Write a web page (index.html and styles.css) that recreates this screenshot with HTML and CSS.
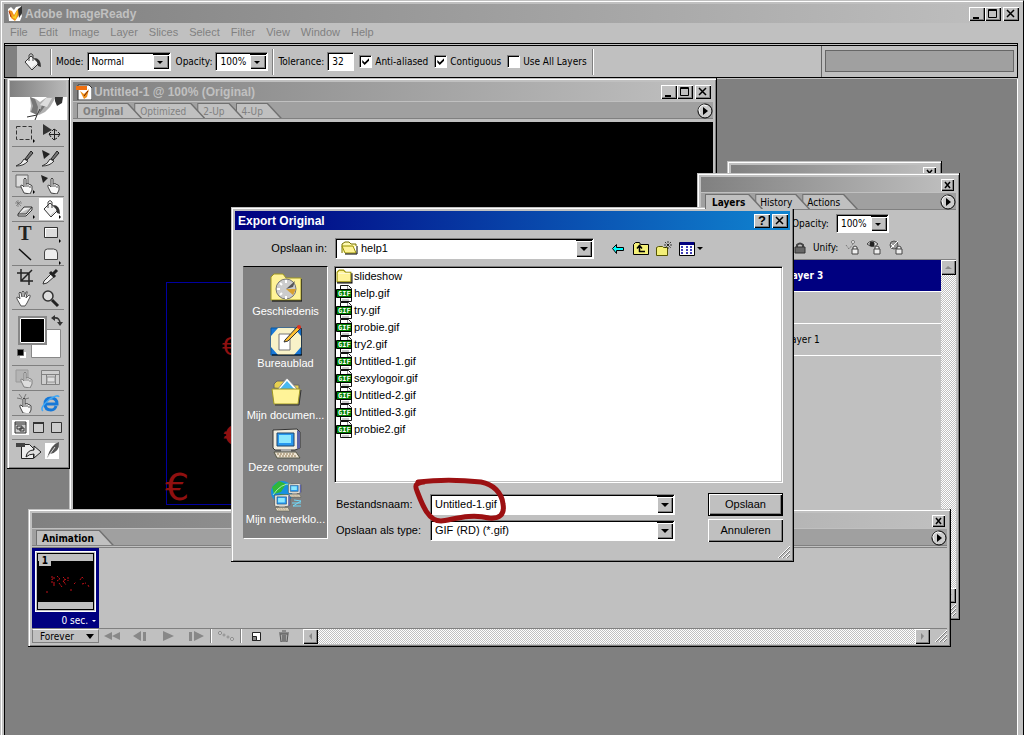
FILE: index.html
```html
<!DOCTYPE html>
<html lang="nl">
<head>
<meta charset="utf-8">
<meta name="viewport" content="width=device-width, initial-scale=1">
<title>Adobe ImageReady</title>
<link rel="stylesheet" href="styles.css">
</head>
<body>
<svg class="defs" width="0" height="0" aria-hidden="true">
  <symbol id="bucket" viewBox="0 0 20 20"><path d="M3 10L9 4l8 7-7 7z" fill="#f4f4f4" stroke="#333"/><path d="M7 9V3q2-3 4 0v6" fill="none" stroke="#444"/><path d="M12 6q7 0 7 9l-3-1-1-4z" fill="#333"/><path d="M10 16l5-5-5 6z" fill="#999"/></symbol>
  <symbol id="hand" viewBox="0 0 20 20"><path d="M8 18L5 12q-1-2 1-2l2 2V4q1-2 2 0v5q1-1 2 0 1-1 2 1 1-1 2 1v4l-2 4z" fill="#fafafa" stroke="#444"/><path d="M10 9v3M12 10v2M14 11v2" stroke="#555"/></symbol>
  <symbol id="feather" viewBox="0 0 16 16"><path d="M1 3l3-2 3 3 2-3 5-1-1 5 2 5-2 5H2z" fill="#fff"/><path d="M2 4l3 1 2 4 3-5 3-2-1 7-4 6-4-3z" fill="#f09018"/><path d="M5 8l2 3 4-8-2 10-3-1z" fill="#f8d020"/><path d="M11 3l4-3v7l-3 5z" fill="#333"/><path d="M2 5l2 6" stroke="#b33808"/></symbol>
  <symbol id="folder" viewBox="0 0 16 16"><path d="M1 13V4l2-2h4l2 2h5v9z" fill="#fff398" stroke="#989000"/><path d="M2 5h11" stroke="#fffbd8"/><path d="M1 14h14V5" fill="none" stroke="#000"/></symbol>
  <symbol id="gif" viewBox="0 0 17 17"><path d="M4.500 .5h8l3 3v13h-11z" fill="#fff" stroke="#111"/><path d="M11.500 1v3h3M6 15h7" fill="none" stroke="#999"/><path d="M.5 4.500h15v8H.5z" fill="#008000" stroke="#000"/><text x="2" y="11" class="gif-label">GIF</text></symbol>
  <symbol id="pc" viewBox="0 0 32 32"><path d="M3 2l24-1 3 3v16l-5 2H5l-2-2z" fill="#f3eee0" stroke="#333"/><path d="M27 2l3 2v16l-3 1z" fill="#5b63a8"/><path d="M7 5h17v13H7z" fill="#2898f0" stroke="#246"/><path d="M9 7h12v8H9z" fill="#8ce8ff"/><path d="M11 21h10v4H11z" fill="#aaa"/><path d="M4 24h22l4 6H7z" fill="#eee5d4" stroke="#554"/><path d="M7 26h17M9 28h17" stroke="#8d7750" stroke-dasharray="2 1"/></symbol>
  <symbol id="play" viewBox="0 0 16 16"><circle cx="8" cy="8" r="7" fill="#ccc" stroke="#000"/><path d="M3 10a5 5 0 0 1 7-7" stroke="#fff" fill="none"/><path d="M6 4l5 4-5 4z"/></symbol>
  <symbol id="grip" viewBox="0 0 12 12"><path d="M0 12L12 0M4 12l8-8M8 12l4-4" stroke="#fff"/><path d="M1 12L12 1M5 12l7-7M9 12l3-3" stroke="#777"/></symbol>
  <symbol id="lock" viewBox="0 0 12 12"><path d="M3 5V3q3-3 6 0v2" fill="none" stroke="#444" stroke-width="2"/><path d="M1 5h10v6H1z" fill="#666" stroke="#333"/></symbol>
</svg>

<main class="app">
  <header class="titlebar app-title">
    <svg width="16" height="16"><use href="#feather"/></svg>
    <h1>Adobe ImageReady</h1>
    <span class="win-buttons">
      <button class="wb" aria-label="Minimize"><svg width="10" height="10"><path d="M1 8h6v2H1z"/></svg></button><button class="wb" aria-label="Maximize"><svg width="10" height="10"><path d="M.5 .5h8v8h-8zM1 1.500h8" fill="none" stroke="#000"/></svg></button><button class="wb apart" aria-label="Close"><svg width="10" height="10"><path d="M1 1l7 7M8 1L1 8" stroke="#000" stroke-width="1.500"/></svg></button>
    </span>
  </header>
  <nav class="menu"><button>File</button><button>Edit</button><button>Image</button><button>Layer</button><button>Slices</button><button>Select</button><button>Filter</button><button>View</button><button>Window</button><button>Help</button></nav>

  <section class="options" aria-label="Tool options">
    <span class="handle"></span>
    <svg class="opt-icon" width="20" height="20"><use href="#bucket"/></svg>
    <span class="rule"></span>
    <label for="mode">Mode:</label>
    <span class="combo mode"><select id="mode"><option>Normal</option></select><i class="arrow"></i></span>
    <label for="opacity">Opacity:</label>
    <span class="combo pct"><select id="opacity"><option>100%</option></select><i class="arrow"></i></span>
    <span class="rule"></span>
    <label for="tol">Tolerance:</label>
    <input class="tol" id="tol" type="text" value="32">
    <label class="check"><input type="checkbox" checked>Anti-aliased</label>
    <label class="check"><input type="checkbox" checked>Contiguous</label>
    <label class="check"><input type="checkbox">Use All Layers</label>
    <span class="rule"></span>
    <span class="well"><span></span></span>
  </section>

  <div class="desktop"></div>
</main>

<section class="window doc" aria-label="Untitled-1">
  <header class="titlebar">
    <svg width="16" height="16"><path d="M2 1h11l3 3v12H2z" fill="#fff" stroke="#333"/><path d="M0 2h11v4H0z" fill="#f07010"/><path d="M4 7l4 3 5-5-2 8-3 2z" fill="#f09018"/><path d="M8 12l4-5" stroke="#702000"/></svg>
    <h2>Untitled-1 @ 100% (Original)</h2>
    <span class="win-buttons">
      <button class="wb" aria-label="Minimize"><svg width="10" height="10"><path d="M1 8h6v2H1z"/></svg></button><button class="wb" aria-label="Maximize"><svg width="10" height="10"><path d="M.5 .5h8v8h-8zM1 1.500h8" fill="none" stroke="#000"/></svg></button><button class="wb apart" aria-label="Close"><svg width="10" height="10"><path d="M1 1l7 7M8 1L1 8" stroke="#000" stroke-width="1.500"/></svg></button>
    </span>
  </header>
  <div class="tabs off"><button class="tab on">Original</button><button class="tab">Optimized</button><button class="tab">2-Up</button><button class="tab">4-Up</button><button class="more" aria-label="Panel menu"><svg width="16" height="16"><use href="#play"/></svg></button></div>
  <div class="canvas">
    <div class="selection"><span class="euro e1">€</span><span class="euro e2">€</span><span class="euro e3">€</span></div>
  </div>
</section>

<aside class="window tools" aria-label="Tools">
  <div class="tool-bar"></div>
  <svg class="plume" width="57" height="23"><path fill="#fff" d="M0 0h57v23H0z"/><path d="M20 0l6 2 4 3 7-5h9l-6 10-5 5-6 3-9-3 1-6z" fill="#b0b0b0"/><path d="M20 0l5 2 3 8-1 8-6-3 2-6zM37 2l-4 3-4 12 7-9z" fill="#777"/><path d="M30 8l6-7h6l-5 9z" fill="#ddd"/><path d="M45 0h8l-1 6-5 3-2-5z" fill="#333"/><path d="M17 20l10-2-2 5M27 18l3-6" fill="none" stroke="#333"/></svg>
  <div class="pair"><button aria-label="Marquee"><svg width="20" height="20"><path d="M1.500 3.500h15v13h-15z" fill="none" stroke="#333" stroke-dasharray="4 2"/><path d="M18 16l2 2-2 2z"/></svg></button><button aria-label="Move"><svg width="20" height="20"><path d="M2 1l9 6-9 5z" fill="#333"/><path d="M8 11.500h11M13.500 6v11M11 8l2-2 3 2M11 15l2 2 3-2M10 9l-2 2 2 3M17 9l2 2-2 3" fill="none" stroke="#222"/></svg></button></div>
  <div class="pair"><button aria-label="Slice"><svg width="20" height="20"><path d="M1 17q6-2 8-7l4 2q-4 5-12 5z" fill="#eee" stroke="#333"/><path d="M10 10l6-8 2 2-6 7z" fill="#777" stroke="#222"/></svg></button><button aria-label="Slice select"><svg width="20" height="20"><path d="M1 17q6-2 8-7l4 2q-4 5-12 5z" fill="#eee" stroke="#333"/><path d="M10 10l6-8 2 2-6 7z" fill="#777" stroke="#222"/><path d="M1 1l8 4-6 5z" fill="#222"/></svg></button></div>
  <div class="pair"><button aria-label="Image map"><svg width="20" height="20"><path d="M1 1h12v12H1z" fill="#ddd" stroke="#666"/><use href="#hand" x="1" y="1" width="20" height="20"/><path d="M18 16l2 2-2 2z"/></svg></button><button aria-label="Image map select"><svg width="20" height="20"><use href="#hand" x="2" y="1" width="20" height="20"/><path d="M0 1l7 3-5 5z" fill="#222"/></svg></button></div>
  <div class="pair"><button aria-label="Eraser"><svg width="20" height="20"><path d="M3 15l6-7h8l-6 7zM3 15v2h8l6-6V8" fill="#eee" stroke="#333"/><path d="M1 2l5 5M6 2L1 7M3 1v7M0 4h7" stroke="#666" stroke-width=".6"/><path d="M18 16l2 2-2 2z"/></svg></button><button class="active" aria-label="Paint bucket"><svg width="20" height="20"><use href="#bucket"/><path d="M18 16l2 2-2 2z"/></svg></button></div>
  <div class="pair flush"><button aria-label="Type"><b class="type">T</b></button><button aria-label="Rectangle"><svg width="20" height="20"><path d="M3.500 4.500h13v10h-13z" fill="#ddd" stroke="#333"/><path d="M4.500 14V5.500h11" fill="none" stroke="#fff"/><path d="M18 16l2 2-2 2z"/></svg></button></div>
  <div class="pair low"><button aria-label="Line"><svg width="20" height="20"><path d="M4 4l12 11" stroke="#111" stroke-width="1.5"/></svg></button><button aria-label="Tab rectangle"><svg width="20" height="20"><path d="M3.500 14.500V7q0-3 3-3h6q4 0 4 4v6.500z" fill="#eee" stroke="#444"/><path d="M18 16l2 2-2 2z"/></svg></button></div>
  <div class="pair flush"><button aria-label="Crop"><svg width="20" height="20"><path d="M6 2v12h12M2 6h12v12M6 14L17 3" fill="none" stroke="#222" stroke-width="1.5"/></svg></button><button aria-label="Eyedropper"><svg width="20" height="20"><path d="M2 17l1-3 8-8 3 3-8 7z" fill="#eee" stroke="#333"/><path d="M9 5l5 5M12 7l4-4" stroke="#222" stroke-width="3"/></svg></button></div>
  <div class="pair low"><button aria-label="Hand"><svg width="20" height="20"><path d="M6 17L2 10q-1-2 1-2l2 2-1-6q1-2 2 0l1 4V3q1-2 2 0v5l2-5q2-1 1 1l-1 5 3-3q2 0 1 2l-3 6-2 3z" fill="#fff" stroke="#555"/></svg></button><button aria-label="Zoom"><svg width="20" height="20"><circle cx="7" cy="7" r="5" fill="#ddd" stroke="#333" stroke-width="1.5"/><path d="M11 11l6 6" stroke="#222" stroke-width="3"/></svg></button></div>
  <div class="colors"><svg width="50" height="50"><path d="M15.500 16.500h29v28h-29z" fill="#fff" stroke="#888"/><path d="M3 4h27v27H3z" fill="#000" stroke="#888" stroke-width="2"/><path d="M4.500 5.500h24v24h-24z" fill="#000" stroke="#fff"/><path d="M38 5q6-1 6 6" fill="none" stroke="#333" stroke-width="1.500"/><path d="M35 5l4-3v6zM41 9h6l-3 4z" fill="#333"/><path d="M4 39h6v6H4z" fill="#fff"/><path d="M1.500 36.500h6v6h-6z" fill="#000" stroke="#666"/></svg></div>
  <div class="pair dim"><button aria-label="Image map visibility"><svg width="20" height="20"><path d="M1 2h12v12H1z" fill="#aaa" stroke="#777"/><use href="#hand" x="1" y="1" width="20" height="20"/></svg></button><button aria-label="Slice visibility"><svg width="20" height="20"><path d="M.5 2.500h18v14H.5zM1 6.500h18M5.500 7v10M14.500 7v10" fill="#ddd" stroke="#444"/><path d="M6 9h8v5H6z" fill="#fff" stroke="#666"/></svg></button></div>
  <div class="pair"><button aria-label="Rollover preview"><svg width="20" height="20"><use href="#hand" y="2" width="20" height="20"/><path d="M4 1l3 4M11 1L9 5M2 5l5 1M14 5l-4 1" stroke="#444" stroke-width=".6"/></svg></button><button aria-label="Preview in browser"><svg width="20" height="20"><path d="M5 11h11q0-6-6-6t-6 6q0 6 6 6 4 0 5-4" fill="none" stroke="#1678d8" stroke-width="3"/><path d="M2 18Q-2 15 9 6q8-5 9-2" fill="none" stroke="#42a8f4" stroke-width="1.5"/></svg></button></div>
  <div class="trio"><button class="active" aria-label="Standard screen"><svg width="13" height="13"><path d="M1 1h11v11H1zM1 3h11M3 5h5v3H3zM6 7h4v3H6z" fill="#ccc" stroke="#333"/></svg></button><button aria-label="Full screen with menu"><svg width="13" height="13"><path d="M1.500 1.500h10v10h-10z" fill="#ccc" stroke="#333"/><path d="M1 2h11" stroke="#333" stroke-width="2"/></svg></button><button aria-label="Full screen"><svg width="13" height="13"><path d="M1.500 1.500h10v10h-10z" fill="#ccc" stroke="#333"/></svg></button></div>
  <div class="jump"><button aria-label="Jump to Photoshop"><svg width="44" height="20"><path d="M5.500 3.500h8l4 4v10h-12z" fill="#eee" stroke="#222"/><path d="M0 4h9" stroke="#444" stroke-width="4"/><path d="M10 16q1-7 8-7V5l7 6-7 6v-4q-5 0-8 3z" fill="#ddd" stroke="#222"/><path d="M29 2h14v16H29z" fill="#fff"/><path d="M31 17Q35 3 43 1q1 10-9 12z" fill="#555"/><path d="M31 17l8-11" stroke="#ddd"/></svg></button></div>
</aside>

<section class="window behind" aria-hidden="true"><div class="titlebar slim"><span class="win-buttons"><span class="wb small"><svg width="8" height="8"><path d="M1 1l5 6M6 1L1 7" stroke="#000" stroke-width="1.500"/></svg></span></span></div></section>

<section class="window layers" aria-label="Layers">
  <div class="titlebar slim"><span class="win-buttons"><button class="wb small" aria-label="Close"><svg width="8" height="8"><path d="M1 1l5 6M6 1L1 7" stroke="#000" stroke-width="1.500"/></svg></button></span></div>
  <div class="tabs"><button class="tab on">Layers</button><button class="tab">History</button><button class="tab">Actions</button><button class="more" aria-label="Panel menu"><svg width="16" height="16"><use href="#play"/></svg></button></div>
  <div class="layer-row"><label for="lop">Opacity:</label><span class="combo pct"><select id="lop"><option>100%</option></select><i class="arrow"></i></span></div>
  <div class="layer-row unify"><svg width="12" height="12"><use href="#lock"/></svg><span>Unify:</span>
    <svg width="15" height="15"><path d="M1 5l3 4 4-5" fill="none" stroke="#666" stroke-dasharray="1 1"/><circle cx="8" cy="2" r="1.500" fill="#fff" stroke="#777"/><path d="M8 9V7q2-2 4 0v2M7 9h6v5H7z" fill="#eee" stroke="#444"/></svg>
    <svg width="15" height="15"><path d="M0 4q5-6 11 0-5 5-11 0z" fill="#ddd" stroke="#444"/><circle cx="5" cy="4" r="2.500" fill="#222"/><path d="M8 9V7q2-2 4 0v2M7 9h6v5H7z" fill="#eee" stroke="#444"/></svg>
    <svg width="15" height="15"><circle cx="5" cy="5" r="4" fill="#999" stroke="#555"/><path d="M2 8l7-7M2 4l3 3" stroke="#fff"/><path d="M8 9V7q2-2 4 0v2M7 9h6v5H7z" fill="#eee" stroke="#444"/></svg>
  </div>
  <div class="layer-body">
    <ul class="layer-list"><li class="current">Layer 3</li><li></li><li>Layer 1</li></ul>
    <div class="vscroll"><button class="sb" aria-label="Scroll up"><svg width="9" height="9"><path d="M1 6l3-3 4 3z" fill="#888"/></svg></button><button class="sb" aria-label="Scroll down"><svg width="9" height="9"><path d="M1 3l3 3 4-3z" fill="#888"/></svg></button></div>
  </div>
  <div class="foot"><svg width="12" height="12"><use href="#grip"/></svg></div>
</section>

<section class="window anim" aria-label="Animation">
  <div class="titlebar slim"><span class="win-buttons"><button class="wb small" aria-label="Close"><svg width="8" height="8"><path d="M1 1l5 6M6 1L1 7" stroke="#000" stroke-width="1.500"/></svg></button></span></div>
  <div class="tabs"><button class="tab on">Animation</button><button class="more" aria-label="Panel menu"><svg width="16" height="16"><use href="#play"/></svg></button></div>
  <div class="frames">
    <div class="frame">
      <div class="thumb"><span class="num">1</span><svg width="55" height="41"><path fill="#000" d="M0 0h55v41H0z"/><path d="M13 16h3v2h-2v4h3M19 15l3 3-3 2M25 16l2 2-2 3 3-3M30 16v4M15 24h3M21 22l3 4M26 21l2 3M36 23l2-2M42 19l2-3 2 2M44 23l4-1M33 28v3M8 31h3M50 24l1 2" fill="none" stroke="#c01018" stroke-dasharray="2 1"/></svg></div>
      <button class="delay">0 sec.<i></i></button>
    </div>
  </div>
  <div class="controls">
    <button class="forever">Forever<i></i></button>
    <button aria-label="First frame"><svg width="18" height="12"><path d="M9 2v8L1 6zM17 2v8L9 6z" fill="#888"/></svg></button>
    <button aria-label="Previous frame"><svg width="18" height="12"><path d="M10 1v10L2 6zM12 2h3v9h-3z" fill="#888"/></svg></button>
    <button aria-label="Play"><svg width="18" height="12"><path d="M4 1l11 5-11 5z" fill="#888"/></svg></button>
    <button aria-label="Next frame"><svg width="18" height="12"><path d="M2 2h3v9H2zM7 1l10 5-10 5z" fill="#888"/></svg></button>
    <span class="rule"></span>
    <button aria-label="Tween"><svg width="18" height="12"><g fill="#ddd" stroke="#888"><circle cx="3" cy="3" r="1.500"/><circle cx="7" cy="5" r="1"/><circle cx="11" cy="7" r="1"/><circle cx="15" cy="9" r="1.500"/></g></svg></button>
    <span class="rule"></span>
    <button aria-label="Duplicate frame"><svg width="18" height="12"><path d="M5.500 2.500h8v8h-8z" fill="#fff" stroke="#222"/><path d="M5.500 10.500v-4h4v4z" fill="#888" stroke="#222"/></svg></button>
    <button aria-label="Delete frame"><svg width="18" height="12"><path d="M5 4h8l-1 8H6zM4 3h10M7 1h4" fill="#aaa" stroke="#555"/><path d="M8 5v6M10 5v6" stroke="#444"/></svg></button>
    <div class="hscroll"><button class="sb" aria-label="Scroll left"><svg width="9" height="9"><path d="M6 1L3 4l3 4z" fill="#888"/></svg></button><button class="sb" aria-label="Scroll right"><svg width="9" height="9"><path d="M3 1l3 3-3 4z" fill="#888"/></svg></button></div>
    <svg class="corner" width="12" height="12"><use href="#grip"/></svg>
  </div>
</section>

<section class="window dialog" role="dialog" aria-label="Export Original">
  <header class="titlebar blue"><h2>Export Original</h2>
    <span class="win-buttons"><button class="wb" aria-label="Help"><b>?</b></button><button class="wb apart" aria-label="Close"><svg width="10" height="10"><path d="M1 1l7 7M8 1L1 8" stroke="#000" stroke-width="1.500"/></svg></button></span>
  </header>
  <div class="dialog-body">
    <div class="look">
      <label for="dir">Opslaan in:</label>
      <span class="combo dir"><svg width="18" height="16"><path d="M1 13V4l3-2h4l2 2h5v2" fill="#fff9b0" stroke="#777000"/><path d="M1 6h11l3 7H4z" fill="#fff398" stroke="#989000"/><path d="M4 14h12V6" fill="none" stroke="#000"/></svg><select id="dir"><option>help1</option></select><i class="arrow"></i></span>
      <span class="nav-icons">
        <button aria-label="Back"><svg width="16" height="16"><path d="M2.500 7.500l4-4v3h7v3h-7v3z" fill="#00ffff" stroke="#000"/></svg></button>
        <button aria-label="Up"><svg width="16" height="16"><path d="M.5 13.500v-10l2-2h4l1 2h8v10z" fill="#f4f078" stroke="#000"/><path d="M6 10.500h6M6.500 11V5M4 7.500l2.500-3 2.500 3" fill="none" stroke="#000" stroke-width="1.500"/></svg></button>
        <button aria-label="New folder"><svg width="16" height="16"><path d="M.5 14.500v-8l2-1h4l1 1h4v8z" fill="#f4f078" stroke="#555500"/><path d="M12 0v9M8 4h8M9 1l6 6M15 1L9 7" stroke="#000" stroke-dasharray="2 1" stroke-width=".7"/></svg></button>
        <button aria-label="View"><svg width="24" height="16"><path d="M.5 1.500h15v13H.5z" fill="#fff" stroke="#000"/><path d="M1 1h14v3H1z" fill="#000080"/><path d="M2 6h2M2 9h2M2 12h2M7 6h2M7 9h2M7 12h2M11 6h2M11 9h2M11 12h2" stroke="#0000a0" stroke-width="1.500"/><path d="M18 6h6l-3 3z"/></svg></button>
      </span>
    </div>
    <div class="browse">
      <nav class="places">
        <button><svg width="32" height="32"><path d="M1 28V5l3-3h9l3 4h15v22z" fill="#fff398" stroke="#a09820"/><path d="M2 29h30V7" fill="none" stroke="#000"/><circle cx="16" cy="17" r="10" fill="#ccc" stroke="#777"/><path d="M16 17L25 9l-2 6z" fill="#555"/><path d="M16 17l10 0-3 6z" fill="#d8a030"/><path d="M16 8v3M7 17h3M16 24v3M10 11l2 2M10 23l2-2" stroke="#fff" stroke-width="2"/></svg><span>Geschiedenis</span></button>
        <button><svg width="32" height="32"><path d="M1 4h30v27H1z" fill="#1878d8" stroke="#0858a0"/><path d="M8 4h16l7 8v11l-7 8H8l-7-8V12z" fill="#f8f2c8"/><path d="M2 31h30V4" fill="none" stroke="#000"/><path d="M9 10h11v16H9z" fill="#fff" stroke="#777"/><path d="M15 16L28 2l3 2-13 13-4 1z" fill="#ffc030" stroke="#333"/><circle cx="29" cy="3" r="2" fill="#e03020"/></svg><span>Bureaublad</span></button>
        <button><svg width="32" height="32"><path d="M4 12V8l3-3h8l3 4h11v5z" fill="#e8d050" stroke="#666"/><path d="M7 14L17 2l12 13-4 5z" fill="#fff" stroke="#888"/><path d="M10 13l7-8 8 9z" fill="#48b8f0"/><path d="M2 13h28l-2 15H4z" fill="#fff398" stroke="#a09820"/><path d="M5 29h24l2-15" fill="none" stroke="#333"/></svg><span>Mijn documen...</span></button>
        <button><svg width="32" height="32"><use href="#pc"/></svg><span>Deze computer</span></button>
        <button><svg width="32" height="32"><circle cx="12" cy="12" r="11" fill="#1890e0"/><path d="M2 7l7-6 7 3-5 8-7 2zM10 14l9 1-5 8-5-1zM18 4l4 5-2 4z" fill="#30b838"/><path d="M3 15q8-12 18-11" stroke="#a8eeb0" fill="none"/><use href="#pc" x="17" y="2" width="15" height="17"/><use href="#pc" x="2" y="14" width="20" height="18"/><path d="M22 23h9M24 20l7 1-8 5h8" fill="none" stroke="#70d8f8"/></svg><span>Mijn netwerklo...</span></button>
      </nav>
      <div class="main-col">
        <ul class="files">
          <li><svg width="17" height="17"><use href="#folder"/></svg>slideshow</li>
          <li><svg width="17" height="17"><use href="#gif"/></svg>help.gif</li>
          <li><svg width="17" height="17"><use href="#gif"/></svg>try.gif</li>
          <li><svg width="17" height="17"><use href="#gif"/></svg>probie.gif</li>
          <li><svg width="17" height="17"><use href="#gif"/></svg>try2.gif</li>
          <li><svg width="17" height="17"><use href="#gif"/></svg>Untitled-1.gif</li>
          <li><svg width="17" height="17"><use href="#gif"/></svg>sexylogoir.gif</li>
          <li><svg width="17" height="17"><use href="#gif"/></svg>Untitled-2.gif</li>
          <li><svg width="17" height="17"><use href="#gif"/></svg>Untitled-3.gif</li>
          <li><svg width="17" height="17"><use href="#gif"/></svg>probie2.gif</li>
        </ul>
        <div class="form">
          <label for="fname">Bestandsnaam:</label>
          <span class="combo"><input id="fname" type="text" value="Untitled-1.gif"><i class="arrow"></i></span>
          <button class="push default">Opslaan</button>
          <label for="ftype">Opslaan als type:</label>
          <span class="combo"><select id="ftype"><option>GIF (RD) (*.gif)</option></select><i class="arrow"></i></span>
          <button class="push">Annuleren</button>
        </div>
      </div>
    </div>
  </div>
  <svg class="dialog-grip" width="12" height="12" aria-hidden="true"><use href="#grip"/></svg>
  <svg class="mark" width="100" height="50" aria-hidden="true"><path d="M7 5C25 3 50 3 70 5C82 7 91 16 92 27C94 38 88 42 78 41C58 36 41 43 30 44C17 44 11 27 6 14C3 7 6 6 13 5" fill="none" stroke="#9c1012" stroke-width="5" stroke-linecap="round"/></svg>
</section>
</body>
</html>
```
FILE: styles.css
```css
* { box-sizing: border-box; }
html, body { height: 100%; }
body {
  margin: 0;
  overflow: hidden;
  background: #808080;
  color: #000;
  font: 11px/13px "Liberation Sans", Arial, sans-serif;
}
button, input, select { font: inherit; color: inherit; margin: 0; padding: 0; border: 0; background: none; border-radius: 0; }
button { cursor: default; }
select { appearance: none; }
input, select { min-width: 0; outline: 0; }
h1, h2 { margin: 0; font-size: 12px; line-height: 14px; }
ul { margin: 0; padding: 0; list-style: none; }
svg { display: block; flex: none; }
.defs { display: none; }
.gif-label { font: bold 7px "DejaVu Sans Mono", monospace; fill: #fff; }

/* Application frame */
.app {
  display: flex;
  flex-direction: column;
  height: 100%;
  padding: 3px 2px 0 3px;
  border: 1px solid #c0c0c0;
  border-right-color: #000;
  border-bottom: 0;
  background: #c0c0c0;
  box-shadow: inset 1px 1px #fff;
}
.titlebar {
  display: flex;
  align-items: center;
  flex: none;
  height: 19px;
  padding: 0 2px 0 3px;
  gap: 2px;
  background: linear-gradient(90deg, #808080, #c0c0c0);
  color: #c0c0c0;
}
.titlebar.slim { height: 15px; }
.titlebar.blue { background: linear-gradient(90deg, #000080, #1084d0); color: #fff; }
.win-buttons { display: flex; margin-left: auto; color: #000; }
.wb {
  display: grid;
  place-items: center;
  width: 16px;
  height: 14px;
  background: #c0c0c0;
  box-shadow: inset 1px 1px #fff, inset -1px -1px #000, inset -2px -2px #808080;
}
.wb b { font-size: 13px; }
.wb.apart { margin-left: 2px; }
.wb.small { width: 13px; height: 12px; }
.menu { display: flex; flex: none; gap: 11px; height: 19px; padding-left: 6px; align-items: center; color: #808080; }

.options {
  display: flex;
  flex: none;
  align-items: center;
  height: 35px;
  margin-top: 1px;
  margin-right: 3px;
  gap: 3px;
  border: 1px solid #000;
  border-top: 3px double #000;
  box-shadow: inset 1px 0 #fff;
}
.options, .tabs, .layers, .anim { font: 10px/13px "DejaVu Sans Condensed", "DejaVu Sans", sans-serif; }
.handle { width: 12px; height: 100%; margin-right: 2px; background: #808080; }
.opt-icon { margin-right: 4px; }
.rule { width: 2px; height: 26px; border-left: 1px solid #808080; background: #fff; margin: 0 1px; }
.combo {
  display: flex;
  align-items: stretch;
  height: 19px;
  padding: 1px 1px 1px 2px;
  background: #fff;
  border: 1px solid;
  border-color: #808080 #fff #fff #808080;
  box-shadow: inset 1px 1px #000;
}
.combo select, .combo input { flex: 1; width: 0; padding-left: 2px; }
.arrow {
  position: relative;
  flex: none;
  width: 16px;
  background: #c0c0c0;
  border-top: 1px solid #000;
  box-shadow: inset 1px 1px #fff, inset -1px -1px #000, inset -2px -2px #808080;
}
.arrow::after {
  content: "";
  position: absolute;
  left: 4px;
  top: 6px;
  border: 4px solid transparent;
  border-top-color: #000;
  border-bottom: 0;
}
.options .arrow::after, .layers .arrow::after { border-width: 3px 3px 0; }
.mode { width: 84px; margin-right: 2px; }
.pct { width: 53px; }
.tol { width: 27px; height: 19px; padding-left: 4px; background: #fff; border: 1px solid #fff; border-top-color: #808080; border-left-color: #808080; box-shadow: inset 1px 1px #000; }
.check { display: flex; align-items: center; gap: 3px; margin: 0 1px 0 2px; }
.check input {
  appearance: none;
  display: grid;
  place-items: center;
  width: 13px;
  height: 13px;
  background: #fff;
  border: 1px solid #fff;
  border-top-color: #808080;
  border-left-color: #808080;
  box-shadow: inset 1px 1px #000;
}
.check input:checked::after { content: ""; width: 7px; height: 7px; background: #000; clip-path: polygon(0 30%, 35% 65%, 100% 0, 100% 35%, 35% 100%, 0 65%); }
.well { width: 196px; height: 100%; margin-left: auto; padding: 4px 3px; border-left: 1px solid #666; }
.well span { display: block; height: 22px; background: #a0a0a0; border: 1px solid #666; }
.desktop { flex: 1; margin-top: 1px; margin-right: 3px; background: #808080; border-left: 1px solid #000; border-right: 1px solid #fff; }

/* Floating windows */
.window {
  position: absolute;
  display: flex;
  flex-direction: column;
  padding: 4px 3px 3px 4px;
  background: #c0c0c0;
  border: 1px solid #000;
  border-width: 0 1px 1px 0;
  box-shadow: inset 1px 1px #c0c0c0, inset 2px 2px #fff, inset -1px -1px #808080;
}

/* Tab strips */
.tabs { display: flex; align-items: flex-end; height: 17px; padding: 1px 0 0 4px; margin-top: 1px; background: #a0a0a0; border-bottom: 1px solid #808080; flex: none; }
.tab { position: relative; isolation: isolate; height: 15px; padding: 1px 21px 0 7px; background: #707070; clip-path: polygon(0 0, calc(100% - 14px) 0, 100% 100%, 0 100%); }
.tab + .tab { margin-left: -8px; }
.tab:nth-child(1) { z-index: 4; }
.tab:nth-child(2) { z-index: 3; }
.tab:nth-child(3) { z-index: 2; }
.tab::before { content: ""; position: absolute; z-index: -1; inset: 1px 2px 0 1px; background: #c0c0c0; clip-path: polygon(0 0, calc(100% - 13px) 0, 100% 100%, 0 100%); }
.tab.on { font-weight: bold; }
.off .tab { padding-right: 19px; padding-left: 6px; color: #808080; }
.more { align-self: center; margin-left: auto; }

/* Document */
.doc { left: 69px; top: 78px; width: 648px; height: 440px; }
.canvas { flex: 1; margin-top: 3px; background: #000; overflow: hidden; padding: 160px 0 0 93px; }
.selection { position: relative; width: 400px; height: 223px; border: 1px solid #0000a0; }
.euro { position: absolute; color: #901010; font-family: "DejaVu Sans", sans-serif; line-height: 1; }
.e1 { left: 55px; top: 52px; font-size: 24px; }
.e2 { left: 57px; top: 140px; font-size: 26px; font-weight: bold; }
.e3 { left: -2px; top: 185px; font-size: 38px; }

/* Toolbox */
.tools { left: 7px; top: 78px; width: 63px; padding: 3px; }
.tool-bar { height: 16px; background: linear-gradient(90deg, #808080, #b8b8b8); }
.pair { display: flex; height: 25px; margin: 0 2px; align-items: center; justify-content: space-around; border-bottom: 1px solid #808080; }
.plume + .pair { height: 27px; }
.pair button { display: grid; place-items: center; width: 24px; height: 22px; }
.pair.flush { height: 22px; border: 0; }
.pair.low { height: 22px; }
.active { background: #fff; }
.type { font: bold 20px/20px "Liberation Serif", serif; color: #222; }
.colors { padding: 3px 0 2px 4px; margin: 0 2px; border-bottom: 1px solid #808080; }
.dim svg { opacity: .5; }
.trio { display: flex; gap: 1px; margin: 0 2px; height: 24px; align-items: center; border-bottom: 1px solid #808080; }
.trio button { padding: 1px 2px; }
.jump { padding: 1px 6px; }

/* Layers */
.behind { left: 727px; top: 161px; width: 215px; height: 100px; }
.layers { left: 697px; top: 173px; width: 263px; height: 447px; }
.layers .tab { padding-right: 18px; }
.layers .tab + .tab { padding-left: 5px; margin-left: -8px; }
.layer-row { display: flex; align-items: center; gap: 7px; height: 26px; padding-left: 91px; flex: none; }
.layer-row.unify { height: 23px; padding-left: 93px; }
.layer-body { display: flex; flex: 1; border-top: 1px solid #808080; }
.layer-list { flex: 1; }
.layer-list li { display: flex; align-items: center; height: 32px; padding-left: 85px; border-bottom: 1px solid #fff; }
.layer-list .current { background: #000080; color: #fff; font-weight: bold; }
.vscroll, .hscroll {
  display: flex;
  justify-content: space-between;
  background: repeating-conic-gradient(#fff 0 25%, #c0c0c0 0 50%) 0 0 / 2px 2px;
}
.vscroll { flex-direction: column; width: 15px; }
.sb { display: grid; place-items: center; width: 15px; height: 15px; background: #c0c0c0; box-shadow: inset 1px 1px #fff, inset -1px -1px #000, inset -2px -2px #808080; }
.foot { display: flex; justify-content: flex-end; padding-top: 1px; }

/* Animation */
.anim { left: 28px; top: 509px; width: 923px; }
.anim .tab { padding-left: 6px; padding-right: 20px; }
.frames { display: flex; height: 81px; margin-top: 1px; border-top: 1px solid #808080; }
.frame { width: 67px; padding: 3px 3px 0; background: #000080; color: #fff; }
.thumb { position: relative; width: 61px; height: 61px; padding: 7px 1px; border: 1px solid #fff; outline: 1px solid #000; outline-offset: -3px; background: #c0c0c0; display: grid; place-items: center; }
.num { position: absolute; left: 3px; top: 3px; z-index: 1; width: 12px; height: 11px; line-height: 11px; text-align: center; background: #c0c0c0; color: #000; font-weight: bold; }
.delay { display: flex; align-items: center; gap: 4px; margin: 2px 0 0 auto; }
.delay i { border: 2px solid transparent; border-top-color: #fff; border-bottom: 0; }
.controls { display: flex; align-items: center; height: 15px; border-top: 1px solid #808080; gap: 10px; }
.forever { display: flex; align-items: center; justify-content: space-between; width: 67px; height: 14px; padding: 0 4px 0 7px; margin-right: -6px; border: 1px solid #808080; border-top-color: #fff; }
.forever i { border: 4px solid transparent; border-top: 5px solid #000; border-bottom: 0; }
.controls .rule { height: 14px; margin: 0 -5px; }
.hscroll { flex: 1; }
.corner { margin-left: -5px; }

/* Export dialog */
.dialog { left: 231px; top: 207px; width: 563px; }
.dialog-body { padding: 8px 7px 16px 8px; }
.look { display: flex; align-items: center; }
.look > label { width: 92px; padding-right: 8px; text-align: right; }
.dir { width: 259px; height: 21px; }
.combo svg { margin-left: 3px; }
.nav-icons { display: flex; gap: 7px; margin-left: 16px; }
.browse { display: flex; align-items: flex-start; gap: 6px; margin-top: 7px; }
.places {
  display: flex;
  flex-direction: column;
  width: 85px;
  padding: 5px 0 6px;
  background: #808080;
  color: #fff;
  border: 1px solid #fff;
  border-top-color: #000;
  border-left-color: #808080;
}
.places button { display: flex; flex-direction: column; align-items: center; gap: 1px; height: 52px; white-space: nowrap; }
.main-col { flex: 1; }
.files {
  height: 217px;
  padding: 1px;
  background: #fff;
  border: 1px solid #fff;
  border-top-color: #808080;
  border-left-color: #808080;
  box-shadow: inset 1px 1px #000, inset -1px -1px #c0c0c0;
}
.files li { display: flex; align-items: center; gap: 1px; height: 17px; }
.form { display: grid; grid-template-columns: 96px 245px 1fr; align-items: center; row-gap: 3px; margin-top: 10px; }
.form label { padding-left: 2px; }
.form .combo { height: 21px; }
.form .push { justify-self: end; }
.push { width: 75px; height: 23px; background: #c0c0c0; box-shadow: inset 1px 1px #fff, inset -1px -1px #000, inset -2px -2px #808080; }
.default { border: 1px solid #000; }
.dialog-grip { position: absolute; right: 3px; bottom: 3px; }
.mark { position: absolute; left: 180px; top: 270px; pointer-events: none; }
```
